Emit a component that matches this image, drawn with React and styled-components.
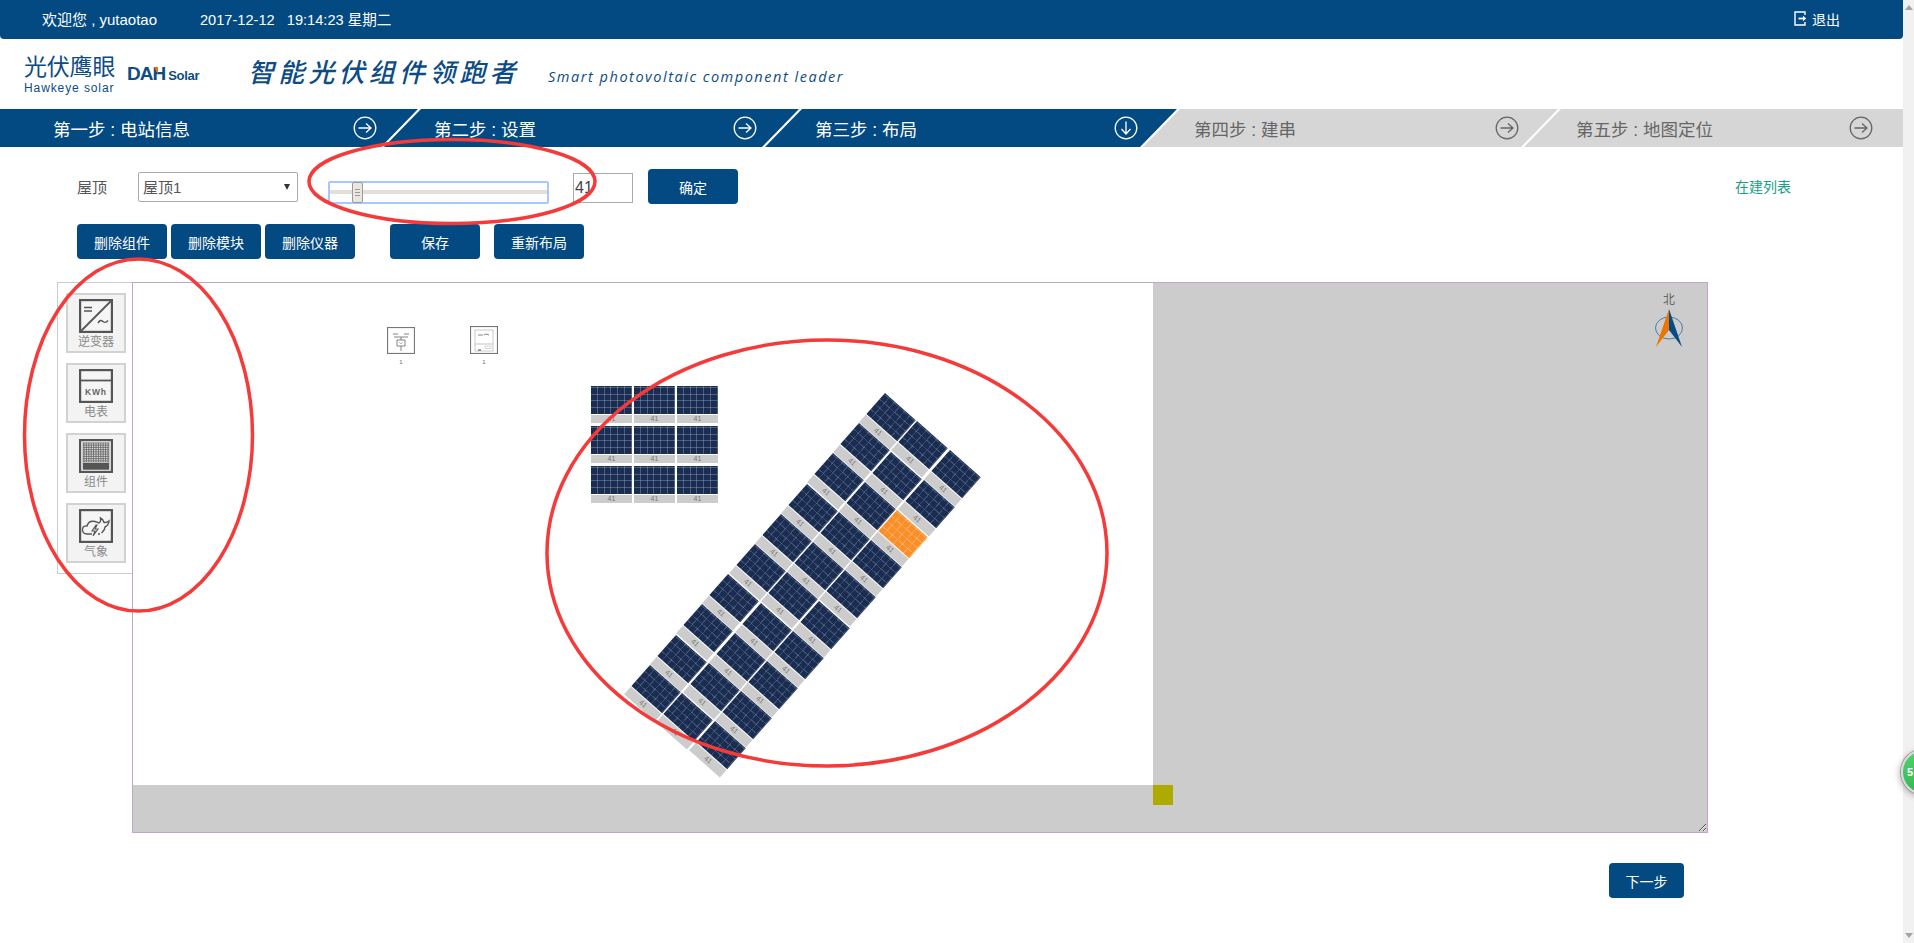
import React from "react";
import styled, { createGlobalStyle } from "styled-components";

const NAVY = "#034a83";
const FONT = `"Liberation Sans", "Noto Sans CJK SC", sans-serif`;

const Global = createGlobalStyle`
  html, body { margin: 0; padding: 0; height: 100%; overflow: hidden; background: #fff; }
  body { font-family: ${FONT}; }
  * { box-sizing: border-box; }
`;

const Page = styled.div`
  position: relative; display: flex; width: 1914px; height: 943px; overflow: hidden; background: #fff;
`;
const Main = styled.main`display: flex; flex-direction: column; width: 1903px; flex: none;`;
const Scrollbar = styled.div`
  width: 11px; flex: none; background: #f1f1f1; display: flex; flex-direction: column;
  justify-content: space-between; align-items: center; padding: 5px 0;
`;
const ScrollArrow = styled.span`
  width: 0; height: 0; border-left: 4px solid transparent; border-right: 4px solid transparent;
  ${p => (p.$up ? "border-bottom: 5px solid #a3a3a3;" : "border-top: 5px solid #a3a3a3;")}
`;

const TopBar = styled.header`
  height: 39px; flex: none; background: ${NAVY}; color: #fff; font-size: 15px;
  display: flex; align-items: center; padding: 0 63px 2px 42px; border-radius: 0 0 4px 4px;
`;
const Welcome = styled.span`width: 158px; flex: none;`;
const Clock = styled.span`flex: 1; white-space: pre; font-size: 14.6px;`;
const Exit = styled.span`display: flex; align-items: center; gap: 3px; font-size: 14px;`;

const Brand = styled.div`height: 70px; flex: none; display: flex; align-items: flex-start; padding: 16px 0 0 24px;`;
const Hawkeye = styled.div`
  width: 103px; flex: none; color: #0d4c84; display: flex; flex-direction: column; line-height: 1;
`;
const HawkCn = styled.span`font-size: 23px; font-weight: 400; letter-spacing: -.2px; line-height: 24px;`;
const HawkEn = styled.span`font-size: 12px; letter-spacing: .9px; margin-top: 3px;`;
const Dah = styled.div`
  width: 121px; flex: none; margin-top: 8px; color: #0d4c84; display: flex; align-items: baseline;
`;
const DahMark = styled.span`
  font-size: 19px; font-weight: 700; letter-spacing: -1px; position: relative;
  &::after {
    content: ""; position: absolute; left: 27px; top: 4px; width: 0; height: 0;
    border-top: 7px solid #ef7300; border-left: 4px solid transparent;
  }
`;
const DahSolar = styled.span`font-size: 13px; font-weight: 700; letter-spacing: -.3px; margin-left: 3px;`;
const Slogan = styled.div`
  width: 300px; flex: none; margin-top: 1px; font-size: 26px; font-weight: 500; font-style: italic;
  letter-spacing: 4.2px; color: #0d4c84; white-space: nowrap; line-height: 34px;
`;
const SloganEn = styled.div`
  margin-top: 12px; font-family: "Open Sans", sans-serif; font-style: italic; font-size: 14.5px;
  letter-spacing: 1.53px; color: #0d4c84; white-space: nowrap; line-height: 20px;
`;

const Steps = styled.nav`height: 38px; flex: none; display: flex;`;
const Step = styled.div`
  height: 38px; flex: none; width: ${p => p.$w}px; margin-left: ${p => (p.$first ? 0 : -34)}px;
  background: ${p => (p.$on ? NAVY : "#d6d6d6")}; color: ${p => (p.$on ? "#fff" : "#666")};
  clip-path: polygon(${p => (p.$first ? "0 0" : "37px 0")}, 100% 0,
    ${p => (p.$last ? "100% 100%" : "calc(100% - 37px) 100%")}, 0 100%);
  display: flex; align-items: center; justify-content: space-between;
  padding: 0 ${p => p.$pr}px 0 ${p => p.$pl}px;
  font-size: 17.5px;
  span { white-space: nowrap; }
`;

const Controls = styled.section`
  display: flex; align-items: center; height: 35px; margin-top: 22px; padding-left: 77px; flex: none;
`;
const FieldLabel = styled.span`width: 61px; font-size: 15px; color: #555; flex: none;`;
const SelectBox = styled.div`
  width: 160px; height: 30px; flex: none; border: 1px solid #aaa; border-radius: 2px; background: #fff;
  display: flex; align-items: center; justify-content: space-between; padding: 0 7px 0 4px;
  font-size: 15px; color: #555;
  &::after { content: ""; border-left: 3.5px solid transparent; border-right: 3.5px solid transparent; border-top: 6px solid #333; }
`;
const Slider = styled.div`
  position: relative; width: 221px; height: 23px; flex: none; margin: 12px 24px 0 30px; background: #fff;
  border: 2px solid #a6c8ff; border-radius: 2px; display: flex; align-items: center;
`;
const Track = styled.div`width: 100%; height: 4px; background: #e2ded8; margin-top: -1px;`;
const Thumb = styled.div`
  position: absolute; left: 22px; top: -1px; width: 11px; height: 21px; background: #eae7e3;
  border: 1px solid #9a9a9a; border-radius: 2px;
  display: flex; flex-direction: column; justify-content: center; align-items: center; gap: 2px;
  i { display: block; width: 5px; height: 1px; background: #999; }
`;
const NumberInput = styled.input`
  width: 60px; height: 30px; flex: none; margin-top: 3px; border: 1px solid #aaa; padding: 0 0 0 1px;
  font: 16px ${FONT}; color: #444; outline: 0; margin-right: 15px;
`;
const Button = styled.button`
  width: ${p => p.$w || 90}px; height: 35px; flex: none; border: 0; border-radius: 4px; background: ${NAVY};
  color: #fff; font: 14px ${FONT}; padding: 0; margin-left: ${p => p.$ml || 0}px;
`;
const ListLink = styled.a`margin-left: auto; margin-right: 112px; color: #17a083; font-size: 14px; margin-top: -2px;`;
const Actions = styled.section`
  display: flex; height: 35px; margin-top: 20px; padding-left: 77px; flex: none;
`;

const Workspace = styled.section`display: flex; margin: 23px 0 0 57px; flex: none; align-items: flex-start;`;
const Palette = styled.aside`
  width: 76px; height: 292px; flex: none; border: 1px solid #ccc;
  padding: 10px 0 0 8px; display: flex; flex-direction: column; gap: 10px; background: #fff;
`;
const Tool = styled.div`
  width: 60px; height: 60px; background: #f3f3f3; border: 2px solid #d2d2d2; display: flex; flex-direction: column;
  align-items: center; padding-top: 4px; color: #8a8a8a; font-size: 12px; line-height: 14px;
  svg { display: block; margin-bottom: 2px; }
`;
const Canvas = styled.div`
  position: relative; width: 1576px; height: 551px; flex: none; margin-left: -1px;
  border: 1px solid #c6a2cc; background: #ccc; overflow: hidden; resize: both;
`;
const Sheet = styled.div`width: 1020px; height: 502px; background: #fff;`;
const Marker = styled.div`position: absolute; left: 1020px; top: 502px; width: 20px; height: 20px; background: #aeaa00;`;
const Device = styled.div`
  position: absolute; left: ${p => p.$x}px; top: ${p => p.$y}px; width: 28px; display: flex; flex-direction: column;
  align-items: center; font-size: 6px; color: #666; line-height: 8px; gap: 4px;
  svg { display: block; }
`;
const Module = styled.div`
  position: absolute; width: 41px; transform-origin: 0 0; display: flex; flex-direction: column; gap: 1px;
`;
const lineColor = p => (p.$hot ? "rgba(255,225,190,.28)" : p.$tilt ? "rgba(190,210,240,.2)" : "rgba(190,210,240,.3)");
const Cells = styled.div`
  height: 28px;
  background-color: ${p => (p.$hot ? "#fa8f2a" : "#1a2c50")};
  background-image:
    repeating-linear-gradient(90deg, transparent 0 5.8px, ${lineColor} 5.8px 6.8px),
    repeating-linear-gradient(0deg, transparent 0 5.8px, ${lineColor} 5.8px 6.8px);
`;
const Tag = styled.div`
  height: ${p => (p.$tilt ? 10 : 8)}px; background: #cccccc; font-size: 7px; line-height: ${p => (p.$tilt ? 10 : 8)}px;
  text-align: center; color: #777;
`;
const North = styled.div`
  position: absolute; left: 1521px; top: 10px; width: 30px; display: flex; flex-direction: column; align-items: center;
  font-size: 12px; color: #666; line-height: 14px; gap: 1px;
`;
const Footer = styled.div`display: flex; justify-content: flex-end; padding-right: 219px; margin-top: 30px; flex: none;`;

const Annotations = styled.svg`position: absolute; left: 0; top: 0; pointer-events: none;`;
const Badge = styled.div`
  position: absolute; left: 1901px; top: 749px; width: 46px; height: 46px; border-radius: 50%;
  background: linear-gradient(#4fd26a, #35b653); border: 2px solid #d8d8d8;
  box-shadow: 0 0 0 1px #9a9a9a, -2px 2px 6px rgba(0,0,0,.25);
  color: #fff; font: 700 11px ${FONT}; padding: 15px 0 0 4px;
`;

const StepIcon = ({ dir = "right", color }) => (
  <svg width="24" height="24" viewBox="0 0 24 24" fill="none" stroke={color} strokeWidth="1.3">
    <circle cx="12" cy="12" r="10.8" />
    {dir === "right"
      ? <path d="M5.5 12h12.5M13 7.5l5 4.5-5 4.5" />
      : <path d="M12 5.5v12.5M7.5 13l4.5 5 4.5-5" />}
  </svg>
);

const ExitIcon = () => (
  <svg width="15" height="15" viewBox="0 0 15 15" fill="none" stroke="#fff" strokeWidth="1.4">
    <path d="M11 4V1H1v13h10v-3" />
    <path d="M4.5 7.5H10" strokeWidth="1.8" />
    <path d="M9 4.8l3.2 2.7L9 10.2z" fill="#fff" stroke="none" />
  </svg>
);

const ToolFrame = ({ children }) => (
  <svg width="34" height="34" viewBox="0 0 34 34" fill="none" stroke="#555">
    <rect x="1" y="1" width="32" height="32" strokeWidth="2.4" fill="#f5f5f5" />
    {children}
  </svg>
);
const InverterIcon = () => (
  <ToolFrame>
    <path d="M2 32L32 2" strokeWidth="1.8" />
    <path d="M5 8.5h8M5 12h8" strokeWidth="1.6" />
    <path d="M19 24c2-3 3-3 5-1.500s3 1.500 5-1" strokeWidth="1.5" />
  </ToolFrame>
);
const MeterIcon = () => (
  <ToolFrame>
    <path d="M1 11.500h32" strokeWidth="1.8" />
    <text x="17" y="26" textAnchor="middle" fontSize="8.500" fontWeight="700" fill="#666" stroke="none" letterSpacing=".8" fontFamily="Liberation Sans">KWh</text>
  </ToolFrame>
);
const gridLines = [];
for (let i = 0; i < 11; i++) gridLines.push(`M${5 + i * 2.4} 4V23M4 ${5 + i * 1.8}H30`);
const PanelIcon = () => (
  <ToolFrame>
    <rect x="4" y="3.500" width="26" height="27" stroke="#777" strokeWidth=".6" fill="#fff" />
    <path d={gridLines.join("")} stroke="#666" strokeWidth=".9" />
    <rect x="4" y="24" width="26" height="6.500" fill="#555" stroke="none" />
  </ToolFrame>
);
const WeatherIcon = () => (
  <ToolFrame>
    <path d="M8 25c-3 0-5-2-4.500-5 .4-2.500 2.500-3.500 4.500-3 1-3.500 4-5.500 8-4.500 2 .5 3 1 4 1.500 1.500-1 2-3 1.500-5 2 1 3 2.500 3.500 4.500 2 .3 3.500-.2 5-1.500-.3 3-2 5-4 6 0 3-2 4.500-3.500 6" strokeWidth="1.4" />
    <path d="M8 25h5M21 25h-2" strokeWidth="1.4" />
    <path d="M17 16l-4 6h3l-2 5 5-7h-3l2-4z" strokeWidth="1.1" />
  </ToolFrame>
);
const TransformerDevice = () => (
  <svg width="28" height="27" viewBox="0 0 28 27" fill="none" stroke="#777">
    <rect x=".5" y=".5" width="27" height="26" strokeWidth="1.2" fill="#fff" />
    <path d="M6 7h5M17 7h5M7 10h14M14 10v3M10 13h8v6h-8zM14 19v5" stroke="#666" strokeWidth=".8" />
    <path d="M12 15l2 2 2-2" stroke="#888" strokeWidth=".6" />
  </svg>
);
const CabinetDevice = () => (
  <svg width="28" height="28" viewBox="0 0 28 28" fill="none" stroke="#777">
    <rect x=".5" y=".5" width="27" height="27" strokeWidth="1.2" fill="#fff" />
    <rect x="5" y="4" width="18" height="21" stroke="#bbb" strokeWidth=".8" />
    <path d="M5 18h18" stroke="#aaa" strokeWidth=".7" />
    <path d="M8 9h5M14 9l2-1 3 1" stroke="#666" strokeWidth=".8" />
    <path d="M8 24h3" stroke="#444" strokeWidth="1" />
    <rect x="15" y="20" width="6" height="2.500" stroke="#aaa" strokeWidth=".5" />
  </svg>
);
const Compass = () => (
  <svg width="30" height="40" viewBox="0 0 30 40">
    <ellipse cx="15" cy="20" rx="13.500" ry="11" fill="none" stroke="#3e739e" strokeWidth=".9" />
    <path d="M15 1L15 22L2 39z" fill="#ef7300" />
    <path d="M15 1L15 22L28 39z" fill="#054b84" />
  </svg>
);

const flat = [];
for (let r = 0; r < 3; r++) for (let c = 0; c < 3; c++) flat.push({ x: 458 + c * 43, y: 102 + r * 40 });

const ROT = 41.5;
const tilted = [];
for (let r = 0; r < 10; r++) {
  for (let c = 0; c < 3; c++) {
    tilted.push({
      x: 885 - 133 + c * 32.3 - r * 26.1,
      y: 393 - 283 + c * 28.3 + r * 30.2,
      hot: c === 2 && r === 2,
    });
  }
}

const stepData = [
  { t: "第一步 : 电站信息", w: 418, on: true, pl: 53, pr: 41 },
  { t: "第二步 : 设置", w: 415, on: true, pl: 50, pr: 42 },
  { t: "第三步 : 布局", w: 412, on: true, dir: "down", pl: 50, pr: 39 },
  { t: "第四步 : 建串", w: 415, pl: 51, pr: 39 },
  { t: "第五步 : 地图定位", w: 379, pl: 52, pr: 30 },
];

export default function App() {
  return (
    <Page>
      <Global />
      <Main>
        <TopBar>
          <Welcome>欢迎您 , yutaotao</Welcome>
          <Clock>{"2017-12-12   19:14:23 星期二"}</Clock>
          <Exit><ExitIcon />退出</Exit>
        </TopBar>
        <Brand>
          <Hawkeye>
            <HawkCn>光伏鹰眼</HawkCn>
            <HawkEn>Hawkeye solar</HawkEn>
          </Hawkeye>
          <Dah><DahMark>DAH</DahMark><DahSolar>Solar</DahSolar></Dah>
          <Slogan>智能光伏组件领跑者</Slogan>
          <SloganEn>Smart photovoltaic component leader</SloganEn>
        </Brand>
        <Steps>
          {stepData.map((s, i) => (
            <Step key={s.t} $w={s.w} $on={s.on} $first={i === 0} $last={i === 4} $pl={s.pl} $pr={s.pr}>
              <span>{s.t}</span>
              <StepIcon dir={s.dir} color={s.on ? "#fff" : "#666"} />
            </Step>
          ))}
        </Steps>
        <Controls>
          <FieldLabel>屋顶</FieldLabel>
          <SelectBox>屋顶1</SelectBox>
          <Slider>
            <Track />
            <Thumb><i /><i /><i /></Thumb>
          </Slider>
          <NumberInput defaultValue="41" />
          <Button>确定</Button>
          <ListLink>在建列表</ListLink>
        </Controls>
        <Actions>
          <Button>删除组件</Button>
          <Button $ml={4}>删除模块</Button>
          <Button $ml={4}>删除仪器</Button>
          <Button $ml={35}>保存</Button>
          <Button $ml={14}>重新布局</Button>
        </Actions>
        <Workspace>
          <Palette>
            <Tool><InverterIcon />逆变器</Tool>
            <Tool><MeterIcon />电表</Tool>
            <Tool><PanelIcon />组件</Tool>
            <Tool><WeatherIcon />气象</Tool>
          </Palette>
          <Canvas>
            <Sheet />
            <Marker />
            <Device $x={254} $y={44}><TransformerDevice />1</Device>
            <Device $x={337} $y={43}><CabinetDevice />1</Device>
            {flat.map((m, i) => (
              <Module key={i} style={{ left: m.x, top: m.y + 1 }}>
                <Cells /><Tag>41</Tag>
              </Module>
            ))}
            {tilted.map((m, i) => (
              <Module key={i} style={{ left: m.x, top: m.y, transform: `rotate(${ROT}deg)` }}>
                <Cells $hot={m.hot} $tilt /><Tag $tilt>41</Tag>
              </Module>
            ))}
            <North>北<Compass /></North>
          </Canvas>
        </Workspace>
        <Footer><Button $w={75}>下一步</Button></Footer>
      </Main>
      <Scrollbar><ScrollArrow $up /><ScrollArrow /></Scrollbar>
      <Badge>5</Badge>
      <Annotations width="1914" height="943" viewBox="0 0 1914 943" fill="none" stroke="#f53a3a" strokeWidth="3.5">
        <ellipse cx="452" cy="181.500" rx="143" ry="42" />
        <ellipse cx="138.500" cy="435" rx="114" ry="176" />
        <ellipse cx="827" cy="553" rx="280" ry="213" />
      </Annotations>
    </Page>
  );
}
